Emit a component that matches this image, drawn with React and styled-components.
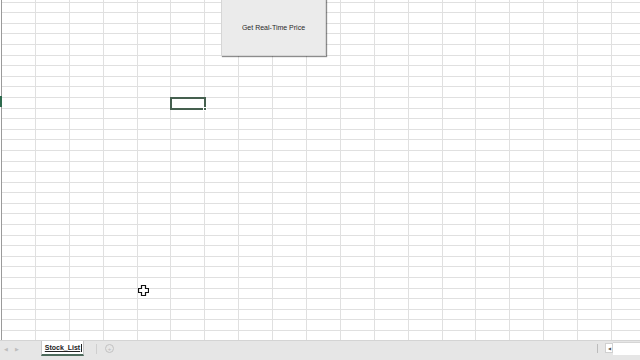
import React from "react";
import styled, { createGlobalStyle } from "styled-components";

const Global = createGlobalStyle`
  html, body { margin: 0; padding: 0; background: #fff; overflow: hidden; }
  body { font-family: "Liberation Sans", Arial, sans-serif; }
`;

const COLS = 19;
const ROWS = 33;
const SEL_ROW = 10;
const SEL_COL = 5;

const Window = styled.div`
  width: 640px;
  height: 360px;
  display: flex;
  flex-direction: column;
  overflow: hidden;
`;

const Sheet = styled.div`
  position: relative;
  flex: 1;
  overflow: hidden;
  padding-left: 1px;
  background: #fff;
`;

const Grid = styled.div`
  display: grid;
  grid-template-columns: repeat(${COLS}, 33.9px);
  grid-auto-rows: 10.6px;
  margin-top: -8px;
  border-left: 1px solid #9a9a9a;
`;

const Cell = styled.div`
  box-sizing: border-box;
  border-right: 1px solid #e0e0e0;
  border-bottom: 1px solid #e0e0e0;
  position: relative;
  ${(p) =>
    p.$selected &&
    `
    outline: 2px solid #45604f;
    outline-offset: -1px;
    z-index: 2;
    &::after {
      content: "";
      position: absolute;
      right: -3px;
      bottom: -3px;
      width: 4px;
      height: 4px;
      background: #45604f;
      border: 1px solid #fff;
      box-sizing: border-box;
    }
  `}
`;

const RowMarker = styled.div`
  position: absolute;
  left: 0;
  top: 96px;
  width: 2px;
  height: 11px;
  background: #2e6b4e;
`;

const MacroButton = styled.button`
  position: absolute;
  left: 221px;
  top: -1px;
  width: 105px;
  height: 57px;
  background: #ebebeb;
  border: 1px solid #d6d6d6;
  box-shadow: 1px 1px 1px rgba(0, 0, 0, 0.45);
  font-family: "Liberation Sans", Arial, sans-serif;
  font-size: 7px;
  color: #2a2a2a;
  padding: 0;
  z-index: 3;
`;

const Cursor = styled.svg`
  position: absolute;
  left: 138px;
  top: 285px;
  z-index: 4;
`;

const TabBar = styled.div`
  height: 20px;
  flex: none;
  background: #e6e6e6;
  border-top: 1px solid #d4d4d4;
  box-sizing: border-box;
  display: flex;
  align-items: flex-start;
  position: relative;
`;

const NavArrows = styled.div`
  width: 41px;
  display: flex;
  gap: 7px;
  padding: 5px 0 0 4px;
  box-sizing: border-box;
  font-size: 5px;
  color: #bdbdbd;
`;

const Tab = styled.div`
  width: 43px;
  height: 15px;
  background: #fff;
  border-left: 1px solid #c8c8c8;
  border-right: 1px solid #c8c8c8;
  border-bottom: 2px solid #4d6b5c;
  box-sizing: border-box;
  display: flex;
  align-items: center;
  justify-content: center;
  padding-left: 2px;
  font-size: 7px;
  font-weight: bold;
  color: #222;
`;

const TabText = styled.span`
  text-decoration: underline;
  text-decoration-color: #222;
  text-underline-offset: 1px;
  border-right: 1px solid #222;
  padding-right: 1px;
  line-height: 8px;
`;

const Sep = styled.div`
  width: 1px;
  height: 10px;
  background: #cfcfcf;
  margin: 3px 0 0 12px;
`;

const AddSheet = styled.div`
  width: 7px;
  height: 7px;
  border: 1px solid #c2c2c2;
  border-radius: 50%;
  margin: 3px 0 0 8px;
  display: flex;
  align-items: center;
  justify-content: center;
  font-size: 6px;
  color: #bbb;
  line-height: 1;
`;

const Spacer = styled.div`
  flex: 1;
`;

const ScrollSep = styled.div`
  width: 1px;
  height: 9px;
  background: #bcbcbc;
  margin: 3px 7px 0 0;
`;

const ScrollBtn = styled.div`
  width: 8px;
  height: 10px;
  margin-top: 2px;
  background: #fff;
  border: 1px solid #d0d0d0;
  box-sizing: border-box;
  font-size: 4px;
  color: #555;
  display: flex;
  align-items: center;
  justify-content: center;
`;

const ScrollTrack = styled.div`
  width: 27px;
  height: 13px;
  margin-top: 1px;
  background: #fff;
  border-top: 1px solid #d6d6d6;
  box-sizing: border-box;
`;

export default function App() {
  const cells = [];
  for (let r = 0; r < ROWS; r++) {
    for (let c = 0; c < COLS; c++) {
      cells.push(
        <Cell key={`${r}-${c}`} $selected={r === SEL_ROW && c === SEL_COL} />
      );
    }
  }
  return (
    <Window>
      <Global />
      <Sheet>
        <Grid>{cells}</Grid>
        <RowMarker />
        <MacroButton>Get Real-Time Price</MacroButton>
        <Cursor width="11" height="11" viewBox="0 0 11 11">
          <path
            d="M3.5 0.5h4v3h3v4h-3v3h-4v-3h-3v-4h3z"
            fill="#fff"
            stroke="#111"
            strokeWidth="1.2"
          />
        </Cursor>
      </Sheet>
      <TabBar>
        <NavArrows>
          <span>◀</span>
          <span>▶</span>
        </NavArrows>
        <Tab>
          <TabText>Stock_List</TabText>
        </Tab>
        <Sep />
        <AddSheet>+</AddSheet>
        <Spacer />
        <ScrollSep />
        <ScrollBtn>◀</ScrollBtn>
        <ScrollTrack />
      </TabBar>
    </Window>
  );
}
